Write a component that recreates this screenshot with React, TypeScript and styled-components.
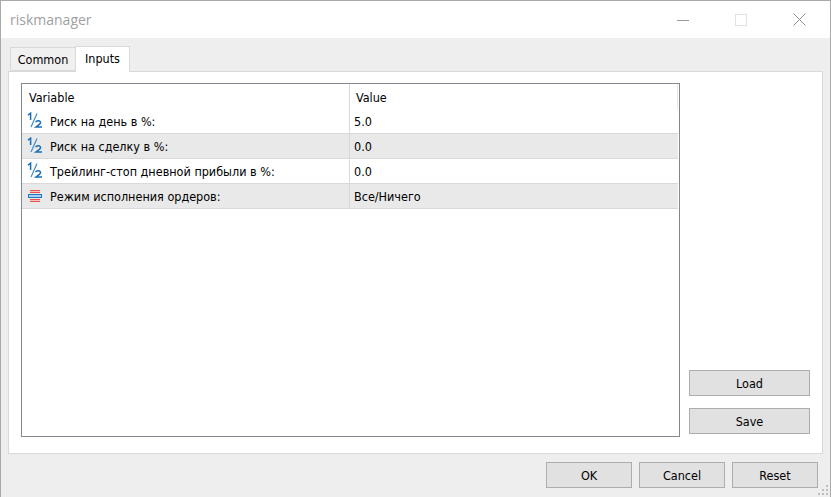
import styled, { createGlobalStyle } from "styled-components";

const GlobalStyle = createGlobalStyle`
  html, body {
    margin: 0;
    padding: 0;
    background: #eeeeee;
  }
  * {
    box-sizing: border-box;
  }
`;

const Window = styled.div`
  width: 831px;
  height: 497px;
  display: flex;
  flex-direction: column;
  position: relative;
  overflow: hidden;
  background: #eeeeee;
  border: 1px solid #a9a9a9;
  border-bottom: none;
  font-family: "DejaVu Sans Condensed", "DejaVu Sans", sans-serif;
  font-stretch: condensed;
  font-size: 12.5px;
  color: #000;
`;

const TitleBar = styled.div`
  height: 37px;
  flex: none;
  display: flex;
  align-items: center;
  justify-content: space-between;
  background: #fff;
  padding: 0 2px 0 9px;
`;

const Title = styled.div`
  font-family: "Open Sans", sans-serif;
  font-stretch: normal;
  font-size: 14px;
  color: #a0a0a0;
`;

const WindowButtons = styled.div`
  display: flex;
  height: 100%;
`;

const WindowButton = styled.div`
  width: 58px;
  display: flex;
  align-items: center;
  justify-content: center;
  svg {
    display: block;
  }
`;

const Body = styled.div`
  flex: 1;
  display: flex;
  flex-direction: column;
  padding: 8px 7px 0 7px;
`;

const TabRow = styled.div`
  height: 25px;
  display: flex;
  align-items: flex-end;
  padding-left: 2px;
  position: relative;
  z-index: 1;
`;

const Tab = styled.div<{ $active?: boolean }>`
  display: flex;
  align-items: center;
  justify-content: center;
  height: ${p => (p.$active ? "26px" : "24px")};
  width: ${p => (p.$active ? "55px" : "65px")};
  padding-bottom: ${p => (p.$active ? "2px" : "0")};
  margin-bottom: ${p => (p.$active ? "-1px" : "0")};
  background: ${p => (p.$active ? "#fff" : "#f0f0f0")};
  border: 1px solid #d9d9d9;
  border-bottom: ${p => (p.$active ? "none" : "1px solid #d9d9d9")};
  border-right: ${p => (p.$active ? "1px solid #d9d9d9" : "none")};
`;

const Panel = styled.div`
  height: 383px;
  display: grid;
  grid-template-columns: 659px 121px;
  column-gap: 9px;
  padding: 11px 12px 16px 12px;
  background: #fff;
  border: 1px solid #d9d9d9;
`;

const ListBox = styled.div`
  border: 1px solid #828790;
  background: #fff;
  padding-right: 1px;
`;

const Row = styled.div<{ $shaded?: boolean; $header?: boolean }>`
  height: 25px;
  display: grid;
  grid-template-columns: 328px 1fr;
  background: ${p => (p.$shaded ? "#e9e9e9" : "#fff")};
  border-bottom: ${p => (p.$header ? "none" : "1px solid #d9d9d9")};
`;

const NameCell = styled.div<{ $header?: boolean }>`
  display: flex;
  align-items: center;
  gap: 7px;
  padding: ${p => (p.$header ? "2px 0 0 7px" : "1px 0 0 5px")};
  border-right: 1px solid #d9d9d9;
`;

const ValueCell = styled.div<{ $header?: boolean }>`
  display: flex;
  align-items: center;
  padding: ${p => (p.$header ? "2px 0 0 6px" : "1px 0 0 4px")};
  border-right: ${p => (p.$header ? "1px solid #e6e6e6" : "none")};
`;

const RowIcon = styled.svg`
  flex: none;
  margin-top: -1px;
`;

const SideColumn = styled.div`
  display: flex;
  flex-direction: column;
  justify-content: flex-end;
  gap: 12px;
  padding-bottom: 3px;
`;

const Button = styled.div<{ $wide?: boolean }>`
  height: 26px;
  width: ${p => (p.$wide ? "121px" : "86px")};
  display: flex;
  align-items: center;
  justify-content: center;
  padding-top: 1px;
  background: #e1e1e1;
  border: 1px solid #adadad;
`;

const Footer = styled.div`
  display: flex;
  justify-content: flex-end;
  gap: 7px;
  padding: 8px 5px 0 0;
`;

const Grip = styled.svg`
  position: absolute;
  right: 1px;
  bottom: 1px;
`;

const FractionIcon = () => (
  <RowIcon width="16" height="18" viewBox="0 0 16 18" fill="none">
    <path d="M1 3.2 L3.6 1.2 V8" stroke="#1b6fb5" strokeWidth="1.5" />
    <path d="M10 1.5 L4 15" stroke="#3f8fcc" strokeWidth="1.2" />
    <path d="M8.5 10 Q10.5 8.4 12.6 9 Q14.6 10.4 12.4 12.4 L9 15 H15" stroke="#1b6fb5" strokeWidth="1.5" />
  </RowIcon>
);

const EnumIcon = () => (
  <RowIcon width="16" height="18" viewBox="0 0 16 18" fill="none">
    <rect x="3" y="3" width="10" height="1" fill="#e4524c" />
    <rect x="3" y="4" width="10" height="1" fill="#f4c4c0" />
    <rect x="3" y="5" width="10" height="1" fill="#e4524c" />
    <rect x="1.5" y="7.5" width="13" height="3" fill="#a8d0f0" stroke="#1f78c0" />
    <rect x="3" y="12" width="10" height="1" fill="#e4524c" />
    <rect x="3" y="13" width="10" height="1" fill="#f4c4c0" />
    <rect x="3" y="14" width="10" height="1" fill="#e4524c" />
  </RowIcon>
);

const params = [
  { name: "Риск на день в %:", value: "5.0", enumType: false },
  { name: "Риск на сделку в %:", value: "0.0", enumType: false },
  { name: "Трейлинг-стоп дневной прибыли в %:", value: "0.0", enumType: false },
  { name: "Режим исполнения ордеров:", value: "Все/Ничего", enumType: true },
];

export default function App() {
  return (
    <>
      <GlobalStyle />
      <Window>
        <TitleBar>
          <Title>riskmanager</Title>
          <WindowButtons>
            <WindowButton>
              <svg width="12" height="12" viewBox="0 0 12 12">
                <path d="M0 6.5H12" stroke="#999" />
              </svg>
            </WindowButton>
            <WindowButton>
              <svg width="12" height="12" viewBox="0 0 12 12">
                <rect x="0.5" y="0.5" width="11" height="11" fill="none" stroke="#e2e2e2" />
              </svg>
            </WindowButton>
            <WindowButton>
              <svg width="13" height="13" viewBox="0 0 13 13">
                <path d="M0.5 0.5L12.5 12.5M12.5 0.5L0.5 12.5" stroke="#8e8e8e" />
              </svg>
            </WindowButton>
          </WindowButtons>
        </TitleBar>
        <Body>
          <TabRow>
            <Tab>Common</Tab>
            <Tab $active>Inputs</Tab>
          </TabRow>
          <Panel>
            <ListBox>
              <Row $header>
                <NameCell $header>Variable</NameCell>
                <ValueCell $header>Value</ValueCell>
              </Row>
              {params.map((p, i) => (
                <Row key={p.name} $shaded={i % 2 === 1}>
                  <NameCell>
                    {p.enumType ? <EnumIcon /> : <FractionIcon />}
                    {p.name}
                  </NameCell>
                  <ValueCell>{p.value}</ValueCell>
                </Row>
              ))}
            </ListBox>
            <SideColumn>
              <Button $wide>Load</Button>
              <Button $wide>Save</Button>
            </SideColumn>
          </Panel>
          <Footer>
            <Button>OK</Button>
            <Button>Cancel</Button>
            <Button>Reset</Button>
          </Footer>
        </Body>
        <Grip width="12" height="12" viewBox="0 0 12 12" fill="#bdbdbd">
          <rect x="9" y="1" width="2" height="2" />
          <rect x="5" y="5" width="2" height="2" />
          <rect x="9" y="5" width="2" height="2" />
          <rect x="1" y="9" width="2" height="2" />
          <rect x="5" y="9" width="2" height="2" />
          <rect x="9" y="9" width="2" height="2" />
        </Grip>
      </Window>
    </>
  );
}
